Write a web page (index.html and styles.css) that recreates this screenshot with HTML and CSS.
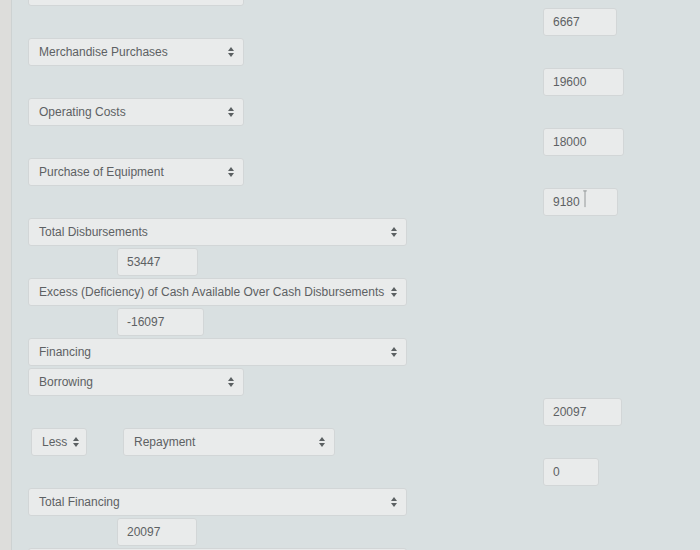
FILE: index.html
```html
<!DOCTYPE html>
<html lang="en">
  <head>
    <meta charset="UTF-8" />
    <meta name="viewport" content="width=device-width, initial-scale=1.0" />
    <title>Cash Budget</title>
    <link rel="stylesheet" href="styles.css">
  </head>
  <body>
    <div class="rail"></div>

    <main class="sheet">
      <!-- field scrolled mostly out of view -->
      <div class="row">
        <div class="select short"></div>
      </div>
      <div class="row">
        <div class="input right w74">6667</div>
      </div>
      <div class="row">
        <div class="select short"><span>Merchandise Purchases</span><svg class="arrows" viewBox="0 0 6 10"><path d="M3 0L6 4H0Z M3 10L6 6H0Z" /></svg></div>
      </div>
      <div class="row">
        <div class="input right w81">19600</div>
      </div>
      <div class="row">
        <div class="select short"><span>Operating Costs</span><svg class="arrows" viewBox="0 0 6 10"><path d="M3 0L6 4H0Z M3 10L6 6H0Z" /></svg></div>
      </div>
      <div class="row">
        <div class="input right w81">18000</div>
      </div>
      <div class="row">
        <div class="select short"><span>Purchase of Equipment</span><svg class="arrows" viewBox="0 0 6 10"><path d="M3 0L6 4H0Z M3 10L6 6H0Z" /></svg></div>
      </div>
      <div class="row">
        <div class="input right w75">9180<svg class="caret" viewBox="0 0 6 20"><path d="M1 1H5M3 1V19" /></svg></div>
      </div>
      <div class="row">
        <div class="select long"><span>Total Disbursements</span><svg class="arrows" viewBox="0 0 6 10"><path d="M3 0L6 4H0Z M3 10L6 6H0Z" /></svg></div>
      </div>
      <div class="row">
        <div class="input indent w81">53447</div>
      </div>
      <div class="row">
        <div class="select long"><span>Excess (Deficiency) of Cash Available Over Cash Disbursements</span><svg class="arrows" viewBox="0 0 6 10"><path d="M3 0L6 4H0Z M3 10L6 6H0Z" /></svg></div>
      </div>
      <div class="row">
        <div class="input indent w87">-16097</div>
      </div>
      <div class="row">
        <div class="select long"><span>Financing</span><svg class="arrows" viewBox="0 0 6 10"><path d="M3 0L6 4H0Z M3 10L6 6H0Z" /></svg></div>
      </div>
      <div class="row">
        <div class="select short"><span>Borrowing</span><svg class="arrows" viewBox="0 0 6 10"><path d="M3 0L6 4H0Z M3 10L6 6H0Z" /></svg></div>
      </div>
      <div class="row">
        <div class="input right w79">20097</div>
      </div>
      <div class="row">
        <div class="pair">
          <div class="select tiny"><span>Less</span><svg class="arrows" viewBox="0 0 6 10"><path d="M3 0L6 4H0Z M3 10L6 6H0Z" /></svg></div>
          <div class="select medium"><span>Repayment</span><svg class="arrows" viewBox="0 0 6 10"><path d="M3 0L6 4H0Z M3 10L6 6H0Z" /></svg></div>
        </div>
      </div>
      <div class="row">
        <div class="input right w56">0</div>
      </div>
      <div class="row">
        <div class="select long"><span>Total Financing</span><svg class="arrows" viewBox="0 0 6 10"><path d="M3 0L6 4H0Z M3 10L6 6H0Z" /></svg></div>
      </div>
      <div class="row">
        <div class="input indent w80">20097</div>
      </div>
      <!-- next field, only its top edge is in view -->
      <div class="row">
        <div class="select long"></div>
      </div>
    </main>
  </body>
</html>
```

FILE: styles.css
```css
html,
body {
  height: 100%;
}

body {
  margin: 0;
  display: flex;
  overflow: hidden;
  background: #d9e0e1;
  color: #5d6163;
  font-family: "Liberation Sans", Arial, sans-serif;
  font-size: 12px;
}

.rail {
  width: 11px;
  flex: none;
  background: #dddddb;
  border-right: 1px solid #cdd2d2;
}

.sheet {
  flex: 1;
  margin-top: -22px;
  padding-left: 16px;
}

.row {
  display: grid;
  grid-template-columns: 515px auto;
  height: 30px;
  align-items: start;
}

.select,
.input {
  box-sizing: border-box;
  height: 28px;
  display: flex;
  align-items: center;
  background: #e9ebeb;
  border: 1px solid #d2d6d7;
  border-radius: 3px;
}

.select {
  justify-content: space-between;
  padding: 0 9px 0 10px;
  white-space: nowrap;
}

.select.short {
  width: 216px;
}

.select.long {
  width: 379px;
}

.select.tiny {
  width: 56px;
}

.select.medium {
  width: 212px;
}

.arrows {
  width: 6px;
  height: 10px;
  flex: none;
  margin-left: 6px;
  fill: #5b6062;
}

.pair {
  display: flex;
  gap: 36px;
  padding-left: 3px;
}

.input {
  position: relative;
  padding-left: 9px;
}

.input.right {
  grid-column: 2;
}

.input.indent {
  margin-left: 89px;
}

.w56 { width: 56px; }
.w74 { width: 74px; }
.w75 { width: 75px; }
.w79 { width: 79px; }
.w80 { width: 80px; }
.w81 { width: 81px; }
.w87 { width: 87px; }

.caret {
  position: absolute;
  left: 38px;
  top: 1px;
  width: 6px;
  height: 18px;
  fill: none;
  stroke: #8a8e90;
  stroke-width: 1;
}
```
